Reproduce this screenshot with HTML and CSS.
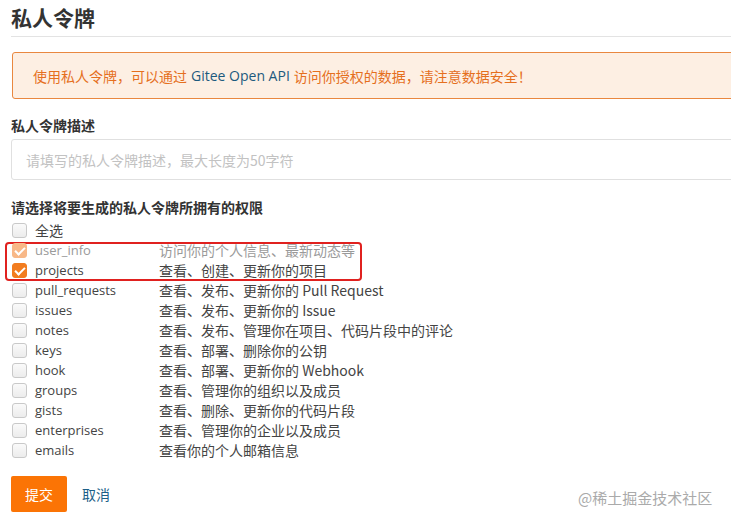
FILE: index.html
```html
<!DOCTYPE html>
<html lang="zh">
<head>
<meta charset="utf-8">
<link rel="stylesheet" href="styles.css">
</head>
<body>
<div class="page">
  <h1 class="title">私人令牌</h1>
  <div class="rule"></div>
  <div class="alert">使用私人令牌，可以通过 <span class="api">Gitee Open API</span> 访问你授权的数据，请注意数据安全！</div>
  <div class="label">私人令牌描述</div>
  <div class="input">请填写的私人令牌描述，最大长度为50字符</div>
  <div class="label label2">请选择将要生成的私人令牌所拥有的权限</div>
  <div class="perms">
    <div class="row"><span class="box"></span><span class="name cjk">全选</span></div>
    <div class="highlight">
      <div class="row disabled"><span class="box checked"></span><span class="name">user_info</span><span class="desc">访问你的个人信息、最新动态等</span></div>
      <div class="row"><span class="box checked"></span><span class="name">projects</span><span class="desc">查看、创建、更新你的项目</span></div>
    </div>
    <div class="row"><span class="box"></span><span class="name">pull_requests</span><span class="desc">查看、发布、更新你的 Pull Request</span></div>
    <div class="row"><span class="box"></span><span class="name">issues</span><span class="desc">查看、发布、更新你的 Issue</span></div>
    <div class="row"><span class="box"></span><span class="name">notes</span><span class="desc">查看、发布、管理你在项目、代码片段中的评论</span></div>
    <div class="row"><span class="box"></span><span class="name">keys</span><span class="desc">查看、部署、删除你的公钥</span></div>
    <div class="row"><span class="box"></span><span class="name">hook</span><span class="desc">查看、部署、更新你的 Webhook</span></div>
    <div class="row"><span class="box"></span><span class="name">groups</span><span class="desc">查看、管理你的组织以及成员</span></div>
    <div class="row"><span class="box"></span><span class="name">gists</span><span class="desc">查看、删除、更新你的代码片段</span></div>
    <div class="row"><span class="box"></span><span class="name">enterprises</span><span class="desc">查看、管理你的企业以及成员</span></div>
    <div class="row"><span class="box"></span><span class="name">emails</span><span class="desc">查看你的个人邮箱信息</span></div>
  </div>
  <div class="actions">
    <span class="btn">提交</span>
    <span class="cancel">取消</span>
  </div>
</div>
<div class="watermark">@稀土掘金技术社区</div>
</body>
</html>
```
FILE: styles.css
```css
html, body {
  margin: 0;
  padding: 0;
  background: #fff;
  overflow: hidden;
}
body {
  width: 731px;
  height: 524px;
  position: relative;
  font-family: "Open Sans", "Noto Sans CJK SC", sans-serif;
  color: #333;
}
.page {
  width: 760px;
  padding-left: 11px;
  display: flex;
  flex-direction: column;
}
.title {
  margin: 0;
  font-size: 21px;
  font-weight: 700;
  line-height: 26px;
  padding-top: 4px;
  color: #333;
  font-family: "Noto Sans CJK SC", sans-serif;
}
.rule {
  margin-top: 6px;
  height: 1px;
  background: #e3e3e3;
}
.alert {
  margin-top: 15px;
  margin-left: 1px;
  height: 47px;
  box-sizing: border-box;
  border: 1px solid #e9873f;
  border-radius: 3px;
  background: #fdefe3;
  color: #e56f1e;
  font-size: 14px;
  padding-left: 20px;
  display: flex;
  align-items: center;
}
.api {
  color: #1c5a7e;
  margin: 0 4px;
}
.label {
  margin-top: 17px;
  font-size: 14px;
  font-weight: 700;
  line-height: 18px;
  color: #333;
  font-family: "Noto Sans CJK SC", sans-serif;
}
.input {
  margin-top: 5px;
  height: 41px;
  box-sizing: border-box;
  border: 1px solid #e0e0e0;
  border-radius: 3px;
  display: flex;
  align-items: center;
  padding-left: 14px;
  font-size: 14px;
  color: #c2c2c2;
  font-family: "Noto Sans CJK SC", sans-serif;
}
.label2 {
  margin-top: 18px;
}
.perms {
  margin-top: 4px;
  display: flex;
  flex-direction: column;
}
.row {
  height: 20px;
  display: flex;
  align-items: center;
  font-size: 13px;
  color: #444;
}
.highlight {
  position: relative;
}
.highlight::before {
  content: "";
  position: absolute;
  left: -6px;
  top: 2px;
  bottom: -1px;
  width: 357px;
  border: 2px solid #e0211f;
  border-radius: 4px;
  box-sizing: border-box;
}
.box {
  width: 15px;
  height: 15px;
  box-sizing: border-box;
  border: 1px solid #c9c9c9;
  border-radius: 3px;
  background: linear-gradient(#fafafa, #ececec);
  margin-left: 1px;
  flex: none;
  position: relative;
}
.box.checked {
  background: #f27c1f;
  border-color: #f27c1f;
}
.box.checked::after {
  content: "";
  position: absolute;
  left: 4px;
  top: 1px;
  width: 4px;
  height: 8px;
  border: solid #fff;
  border-width: 0 2px 2px 0;
  transform: rotate(45deg);
}
.disabled .box.checked {
  background: #f8b888;
  border-color: #f8b888;
}
.disabled {
  color: #9a9a9a;
}
.name {
  width: 124px;
  margin-left: 8px;
  flex: none;
}
.name.cjk {
  font-size: 14px;
  font-family: "Noto Sans CJK SC", sans-serif;
}
.desc {
  white-space: nowrap;
  font-size: 14px;
  font-family: "Noto Sans CJK SC", sans-serif;
}
.actions {
  margin-top: 16px;
  display: flex;
  align-items: center;
  gap: 15px;
}
.btn {
  width: 56px;
  height: 36px;
  background: #fb7405;
  color: #fff;
  border-radius: 2px;
  display: flex;
  align-items: center;
  justify-content: center;
  font-size: 14px;
  font-family: "Noto Sans CJK SC", sans-serif;
}
.cancel {
  color: #1c5f88;
  font-size: 14px;
  font-family: "Noto Sans CJK SC", sans-serif;
}
.watermark {
  position: absolute;
  left: 578px;
  top: 488px;
  font-size: 15px;
  color: #aaa;
  line-height: 20px;
  font-family: "Noto Sans CJK SC", sans-serif;
}
```
